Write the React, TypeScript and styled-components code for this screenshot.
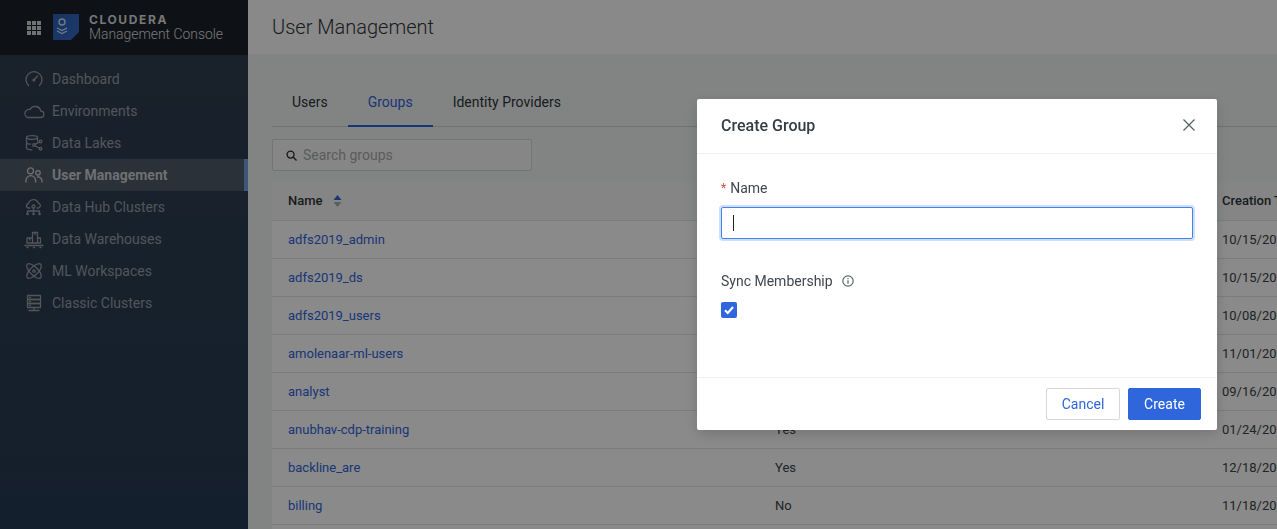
import React from "react";
import styled, { createGlobalStyle } from "styled-components";

const Global = createGlobalStyle`
  html, body { margin: 0; padding: 0; height: 100%; overflow: hidden; }
  body { font-family: Roboto, "Liberation Sans", sans-serif; -webkit-font-smoothing: antialiased; }
  * { box-sizing: border-box; }
`;

const Page = styled.div`
  display: flex;
  width: 1277px;
  height: 529px;
  overflow: hidden;
  background: #edf1f0;
`;
const Sidebar = styled.aside`
  flex: 0 0 248px;
  display: flex;
  flex-direction: column;
  background: linear-gradient(180deg, #2f3e4e 0%, #263a52 100%);
`;
const Brand = styled.div`
  height: 55px;
  display: flex;
  align-items: center;
  padding-left: 27px;
  background: #1a2128;
`;
const BrandGrid = styled.div`
  display: grid;
  grid-template-columns: repeat(3, 4px);
  grid-auto-rows: 4px;
  gap: 1px;
  margin-right: 12px;
`;
const BrandDot = styled.span`
  background: #d0d0d0;
`;
const LogoBox = styled.div`
  width: 26px;
  height: 26px;
  margin: -1px 10px 0 0;
  display: flex;
`;
const BrandText = styled.div`
  display: flex;
  flex-direction: column;
`;
const BrandName = styled.div`
  font-family: "Inter", "Liberation Sans", sans-serif;
  font-size: 12px;
  font-weight: 700;
  letter-spacing: 1.6px;
  line-height: 13px;
  color: #d9d9d9;
`;
const BrandSub = styled.div`
  font-size: 13.9px;
  font-weight: 300;
  line-height: 17px;
  color: #dcdcdc;
`;
const Nav = styled.nav`
  display: flex;
  flex-direction: column;
  padding-top: 8px;
`;
const NavRow = styled.div<{ $active?: boolean }>`
  height: 32px;
  display: flex;
  align-items: center;
  padding-left: 24px;
  gap: 10px;
  font-size: 14px;
  font-weight: ${(p) => (p.$active ? 700 : 400)};
  color: ${(p) => (p.$active ? "#c8ccd0" : "#969ca3")};
  background: ${(p) => (p.$active ? "#4e5a66" : "transparent")};
  border-right: 4px solid ${(p) => (p.$active ? "#6f9ee0" : "transparent")};
`;
const NavIcon = styled.svg`
  width: 18px;
  height: 18px;
  flex: none;
  overflow: visible;
  fill: none;
  stroke: currentColor;
  stroke-width: 1.3;
  stroke-linecap: round;
  stroke-linejoin: round;
`;
const Main = styled.main`
  flex: 1;
  min-width: 0;
  display: flex;
  flex-direction: column;
`;
const TopBar = styled.header`
  height: 54px;
  flex: none;
  display: flex;
  align-items: center;
  padding-left: 24px;
  font-size: 20px;
  font-weight: 300;
  color: #2e3438;
  background: #fafafa;
`;
const Content = styled.div`
  padding: 28px 0 0 24px;
  width: 1100px;
`;
const Tabs = styled.div`
  display: flex;
  height: 45px;
  border-bottom: 1px solid #c9cfcf;
`;
const Tab = styled.div<{ $active?: boolean }>`
  padding: 12px 20px 0;
  font-size: 14px;
  line-height: 16px;
  color: ${(p) => (p.$active ? "#2f63d8" : "#2e3438")};
  border-bottom: ${(p) => (p.$active ? "2px solid #2f63d8" : "none")};
  margin-bottom: -1px;
`;
const Search = styled.div`
  width: 260px;
  height: 32px;
  margin-top: 12px;
  display: flex;
  align-items: center;
  gap: 6px;
  padding-left: 13px;
  font-size: 14px;
  color: #a4a8ab;
  background: #f4f5f5;
  border: 1px solid #cfd3d5;
  border-radius: 2px;
`;
const SearchIcon = styled.svg`
  width: 11px;
  height: 11px;
  fill: none;
  stroke: #2a2f33;
  stroke-width: 1.5;
`;
const Table = styled.div`
  margin-top: 12px;
  display: flex;
  flex-direction: column;
`;
const TRow = styled.div<{ $head?: boolean }>`
  height: 38px;
  flex: none;
  display: grid;
  grid-template-columns: 487px 447px 1fr;
  align-items: center;
  padding-left: 16px;
  padding-bottom: ${(p) => (p.$head ? "2px" : "0")};
  font-size: 13px;
  font-weight: ${(p) => (p.$head ? 500 : 400)};
  color: ${(p) => (p.$head ? "#2e3438" : "#3c4246")};
  background: ${(p) => (p.$head ? "#f2f3f3" : "#fbfbfb")};
  border-bottom: 1px solid #e0e2e2;
  white-space: nowrap;
`;
const NameHead = styled.div`
  display: flex;
  align-items: center;
  gap: 10px;
`;
const SortIcon = styled.svg`
  width: 9px;
  height: 14px;
`;
const GroupLink = styled.span`
  color: #2f63d8;
`;
const Mask = styled.div`
  position: fixed;
  inset: 0;
  background: rgba(0, 0, 0, 0.45);
`;
const Modal = styled.section`
  position: fixed;
  left: 697px;
  top: 99px;
  width: 520px;
  height: 331px;
  display: flex;
  flex-direction: column;
  background: #fff;
  border-radius: 2px;
  box-shadow: 0 4px 14px rgba(0, 0, 0, 0.16);
`;
const ModalHead = styled.div`
  height: 55px;
  flex: none;
  display: flex;
  align-items: center;
  justify-content: space-between;
  padding: 0 21px 2px 24px;
  border-bottom: 1px solid #eef0f1;
  font-size: 16px;
  font-weight: 500;
  color: #343c44;
`;
const CloseIcon = styled.svg`
  width: 14px;
  height: 14px;
  stroke: #575e64;
  stroke-width: 1.2;
  fill: none;
`;
const ModalBody = styled.div`
  flex: 1;
  display: flex;
  flex-direction: column;
  padding: 25px 24px 0;
`;
const FieldLabel = styled.label`
  display: flex;
  align-items: center;
  height: 18px;
  font-size: 14px;
  color: #3f474e;
`;
const Star = styled.span`
  color: #d9483b;
  font-size: 12px;
  margin-right: 4px;
`;
const FakeInput = styled.div`
  height: 32px;
  margin-top: 10px;
  display: flex;
  align-items: center;
  padding-left: 11px;
  border: 1px solid #3f82ea;
  border-radius: 2px;
  box-shadow: 0 0 0 2px #cfdff6;
`;
const Caret = styled.span`
  width: 1px;
  height: 16px;
  background: #1f2429;
`;
const SyncLabel = styled(FieldLabel)`
  margin-top: 33px;
  gap: 9px;
`;
const InfoIcon = styled.svg`
  width: 12px;
  height: 12px;
  fill: none;
  stroke: #60676d;
  stroke-width: 1.2;
`;
const Check = styled.div`
  width: 16px;
  height: 16px;
  margin-top: 12px;
  display: flex;
  align-items: center;
  justify-content: center;
  background: #2f66dc;
  border-radius: 2px;
`;
const CheckIcon = styled.svg`
  width: 10px;
  height: 10px;
  fill: none;
  stroke: #fff;
  stroke-width: 2;
`;
const ModalFoot = styled.div`
  height: 53px;
  flex: none;
  display: flex;
  justify-content: flex-end;
  align-items: center;
  gap: 8px;
  padding: 0 16px 0 0;
  border-top: 1px solid #eef0f1;
`;
const Btn = styled.div<{ $primary?: boolean }>`
  width: ${(p) => (p.$primary ? "73px" : "74px")};
  height: 32px;
  display: flex;
  align-items: center;
  justify-content: center;
  font-size: 14px;
  color: ${(p) => (p.$primary ? "#fff" : "#2f66dc")};
  background: ${(p) => (p.$primary ? "#2f66dc" : "#fff")};
  border: 1px solid ${(p) => (p.$primary ? "#2f66dc" : "#d5d8da")};
  border-radius: 2px;
`;

const navItems: { label: string; active?: boolean; icon: React.ReactNode }[] = [
  {
    label: "Dashboard",
    icon: (
      <>
        <path d="M4.500 15.500a8 8 0 1 1 11 0" />
        <path d="M10 10l3.500-4" />
        <circle cx="9.800" cy="10.200" r="0.800" fill="currentColor" />
      </>
    ),
  },
  {
    label: "Environments",
    icon: <path d="M4 15.500H16.500a3.200 3.200 0 0 0 .3-6.400a5.800 5.800 0 0 0-10.800-1.600a4 4 0 0 0-2 8z" />,
  },
  {
    label: "Data Lakes",
    icon: (
      <>
        <ellipse cx="8" cy="3.500" rx="5.500" ry="1.800" />
        <path d="M2.500 3.500V14c0 1 2 1.800 5.500 1.800M13.500 3.500V7M2.500 8.500c0 1 2 1.600 4 1.700" />
        <circle cx="10" cy="11" r="1.300" />
        <circle cx="16.500" cy="7.500" r="1.300" />
        <circle cx="16.500" cy="14.800" r="1.300" />
        <path d="M11 10.400l4.400-2.400M11 11.700l4.400 2.500" />
      </>
    ),
  },
  {
    label: "User Management",
    active: true,
    icon: (
      <>
        <circle cx="6.500" cy="4.800" r="3" />
        <circle cx="14" cy="6.800" r="2.200" />
        <path d="M2 16v-1.500a4.800 4.800 0 0 1 9.600 0V16M13.500 11a4 4 0 0 1 4.500 4v1" />
      </>
    ),
  },
  {
    label: "Data Hub Clusters",
    icon: (
      <>
        <path d="M6 10H4.900a2.200 2.200 0 0 1-.3-4.400 5 5 0 0 1 9.600-.6 2.600 2.600 0 0 1 .5 5H13" />
        <circle cx="9.500" cy="8.500" r="1.500" />
        <path d="M9.500 10v3M3.500 15v-2h12v2M9.500 13v2" />
        <circle cx="3.500" cy="16" r=".7" />
        <circle cx="9.500" cy="16" r=".7" />
        <circle cx="15.500" cy="16" r=".7" />
      </>
    ),
  },
  {
    label: "Data Warehouses",
    icon: (
      <>
        <path d="M1 15.500h18M3 17.500h1M9.500 17.500h1M16 17.500h1" />
        <path d="M3 13V8h5.500v5M8.500 13H3M8.500 13h8V8h-3M8.500 8V2.500h5V13" />
        <path d="M11 2.500v2M5.700 8v2" />
      </>
    ),
  },
  {
    label: "ML Workspaces",
    icon: (
      <>
        <ellipse cx="10" cy="9" rx="4" ry="9.500" transform="rotate(45 10 9)" />
        <ellipse cx="10" cy="9" rx="4" ry="9.500" transform="rotate(-45 10 9)" />
        <circle cx="10" cy="9" r="1.200" />
      </>
    ),
  },
  {
    label: "Classic Clusters",
    icon: (
      <>
        <rect x="3.500" y="1.500" width="13" height="4" />
        <rect x="3.500" y="5.500" width="13" height="4" />
        <rect x="3.500" y="9.500" width="13" height="4" />
        <path d="M5.500 3.500h1M5.500 7.500h1M5.500 11.500h1M10 13.500v3M5 16.500h10" />
      </>
    ),
  },
];

const rows: [string, string, string][] = [
  ["adfs2019_admin", "Yes", "10/15/2020"],
  ["adfs2019_ds", "Yes", "10/15/2020"],
  ["adfs2019_users", "Yes", "10/08/2020"],
  ["amolenaar-ml-users", "Yes", "11/01/2020"],
  ["analyst", "Yes", "09/16/2020"],
  ["anubhav-cdp-training", "Yes", "01/24/2020"],
  ["backline_are", "Yes", "12/18/2020"],
  ["billing", "No", "11/18/2020"],
];

export default function App() {
  return (
    <>
      <Global />
      <Page>
        <Sidebar>
          <Brand>
            <BrandGrid>
              {Array.from({ length: 9 }).map((_, i) => (
                <BrandDot key={i} />
              ))}
            </BrandGrid>
            <LogoBox>
              <svg width="26" height="26" viewBox="0 0 26 26">
                <defs>
                  <linearGradient id="lg" x1="0" y1="0" x2="1" y2="1">
                    <stop offset="0" stopColor="#2c5fb5" />
                    <stop offset="1" stopColor="#3468c0" />
                  </linearGradient>
                </defs>
                <path d="M0 0H26V18L18 26H0Z" fill="url(#lg)" />
                <circle cx="9" cy="8" r="3" fill="none" stroke="#cfdcf2" strokeWidth="1.400" />
                <path d="M4 14l5 2.500 5-2.500M4 17l5 2.500 5-2.500" fill="none" stroke="#cfdcf2" strokeWidth="1.300" />
              </svg>
            </LogoBox>
            <BrandText>
              <BrandName>CLOUDERA</BrandName>
              <BrandSub>Management Console</BrandSub>
            </BrandText>
          </Brand>
          <Nav>
            {navItems.map((n) => (
              <NavRow key={n.label} $active={n.active}>
                <NavIcon viewBox="0 0 18 18">{n.icon}</NavIcon>
                {n.label}
              </NavRow>
            ))}
          </Nav>
        </Sidebar>
        <Main>
          <TopBar>User Management</TopBar>
          <Content>
            <Tabs>
              <Tab>Users</Tab>
              <Tab $active>Groups</Tab>
              <Tab>Identity Providers</Tab>
            </Tabs>
            <Search>
              <SearchIcon viewBox="0 0 12 12">
                <circle cx="5" cy="5" r="3.800" />
                <path d="M8 8l3.500 3.500" />
              </SearchIcon>
              Search groups
            </Search>
            <Table>
              <TRow $head>
                <NameHead>
                  Name
                  <SortIcon viewBox="0 0 9 14">
                    <path d="M4.500 1 8.500 6H.5Z" fill="#2f63d8" />
                    <path d="M4.500 13 8.500 8H.5Z" fill="#a6abae" />
                  </SortIcon>
                </NameHead>
                <span>Sync Membership</span>
                <span>Creation Time</span>
              </TRow>
              {rows.map((r) => (
                <TRow key={r[0]}>
                  <GroupLink>{r[0]}</GroupLink>
                  <span>{r[1]}</span>
                  <span>{r[2]}</span>
                </TRow>
              ))}
              <TRow />
            </Table>
          </Content>
        </Main>
      </Page>
      <Mask />
      <Modal>
        <ModalHead>
          Create Group
          <CloseIcon viewBox="0 0 14 14">
            <path d="M1.500 1.500l11 11M12.500 1.500l-11 11" />
          </CloseIcon>
        </ModalHead>
        <ModalBody>
          <FieldLabel>
            <Star>*</Star>Name
          </FieldLabel>
          <FakeInput>
            <Caret />
          </FakeInput>
          <SyncLabel>
            Sync Membership
            <InfoIcon viewBox="0 0 12 12">
              <circle cx="6" cy="6" r="5.200" />
              <path d="M6 5.200v3.600M6 3v1.200" />
            </InfoIcon>
          </SyncLabel>
          <Check>
            <CheckIcon viewBox="0 0 10 10">
              <path d="M1 5.200 3.800 8 9 2" />
            </CheckIcon>
          </Check>
        </ModalBody>
        <ModalFoot>
          <Btn>Cancel</Btn>
          <Btn $primary>Create</Btn>
        </ModalFoot>
      </Modal>
    </>
  );
}
